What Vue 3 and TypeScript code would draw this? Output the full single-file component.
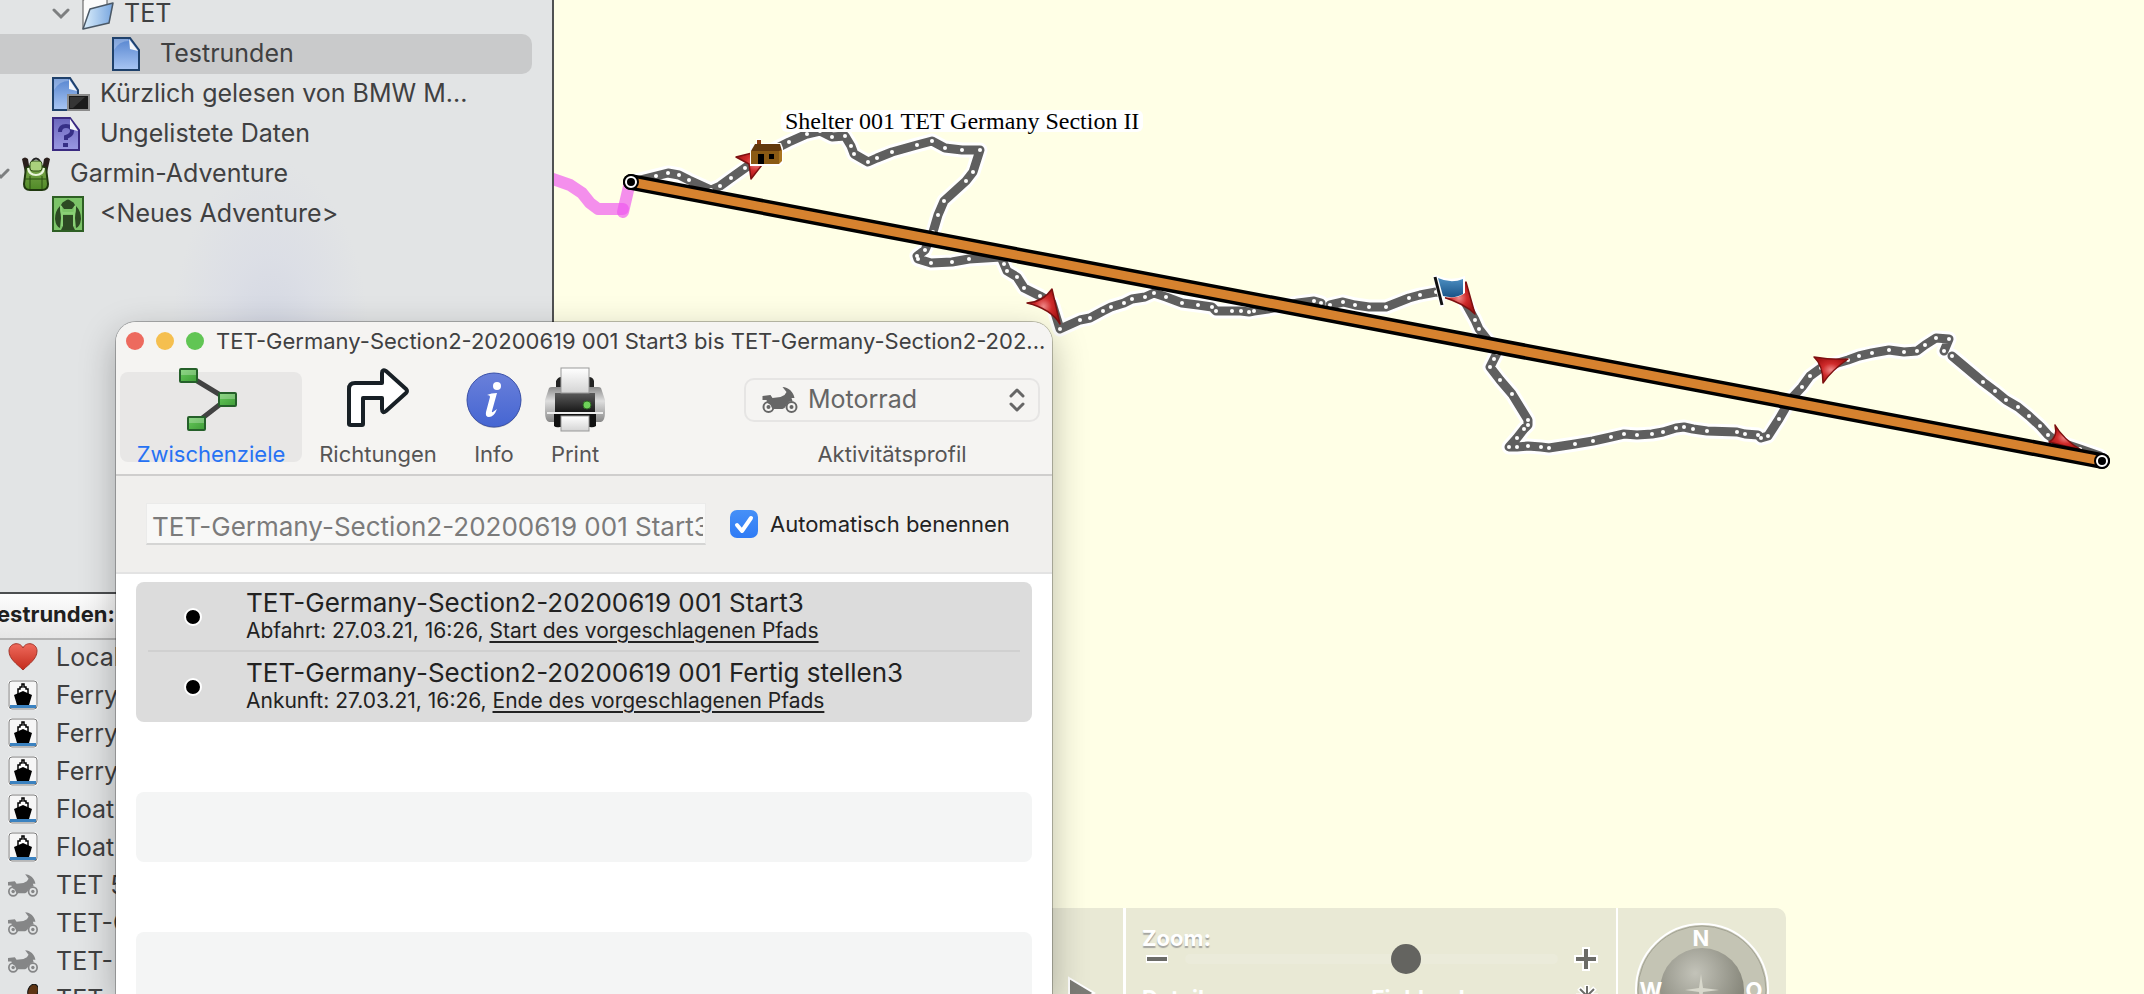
<script setup lang="ts">
import { ref } from 'vue'

interface TreeRow {
  label: string
  icon: 'folder' | 'doc' | 'device' | 'unlisted' | 'backpack' | 'adventure'
  level: string
  open?: boolean
  selected?: boolean
}
interface ListRow {
  label: string
  icon: 'heart' | 'ferry' | 'moto' | 'foot'
}
interface Stop {
  name: string
  when: string
  link: string
}
type Point = [number, number]

const tree: TreeRow[] = [
  { label: 'TET', icon: 'folder', level: 'l2', open: true },
  { label: 'Testrunden', icon: 'doc', level: 'l3', selected: true },
  { label: 'Kürzlich gelesen von BMW M...', icon: 'device', level: 'l1' },
  { label: 'Ungelistete Daten', icon: 'unlisted', level: 'l1' },
  { label: 'Garmin-Adventure', icon: 'backpack', level: 'l0', open: true },
  { label: '<Neues Adventure>', icon: 'adventure', level: 'l1' },
]

const items: ListRow[] = [
  { label: 'Local', icon: 'heart' },
  { label: 'Ferry', icon: 'ferry' },
  { label: 'Ferry', icon: 'ferry' },
  { label: 'Ferry', icon: 'ferry' },
  { label: 'Float', icon: 'ferry' },
  { label: 'Float', icon: 'ferry' },
  { label: 'TET 5', icon: 'moto' },
  { label: 'TET-G', icon: 'moto' },
  { label: 'TET-', icon: 'moto' },
  { label: 'TET', icon: 'foot' },
]

const stops: Stop[] = [
  { name: 'TET-Germany-Section2-20200619 001 Start3', when: 'Abfahrt: 27.03.21, 16:26, ', link: 'Start des vorgeschlagenen Pfads' },
  { name: 'TET-Germany-Section2-20200619 001 Fertig stellen3', when: 'Ankunft: 27.03.21, 16:26, ', link: 'Ende des vorgeschlagenen Pfads' },
]

const routeName = ref('TET-Germany-Section2-20200619 001 Start3 bis TET-Germany-Section2-20200619 001 Fertig stellen3')
const autoName = ref(true)
const profile = ref('Motorrad')
const zoom = ref(60)

const tracks: Point[][] = [
  [[632, 182], [656, 176], [668, 173], [679, 175], [689, 180], [711, 190], [720, 186], [731, 178], [745, 168], [765, 154], [789, 142], [807, 134], [820, 131], [832, 137], [845, 136], [851, 146], [854, 154], [868, 162], [877, 158], [892, 152], [917, 145], [932, 141], [945, 148], [962, 150], [980, 150], [973, 172], [966, 181], [944, 201], [938, 215], [933, 232], [925, 250], [917, 256], [918, 259], [931, 263], [952, 262], [969, 259], [1001, 257], [1004, 264], [1007, 271], [1017, 277], [1024, 288], [1040, 296], [1052, 303], [1060, 329], [1080, 320], [1090, 318], [1103, 311], [1111, 307], [1124, 303], [1132, 299], [1145, 297], [1154, 293], [1166, 297], [1182, 303], [1198, 305], [1212, 307], [1216, 311], [1232, 311], [1241, 311], [1249, 312], [1254, 311], [1268, 309], [1298, 303], [1314, 301], [1321, 303]],
  [[1330, 305], [1343, 302], [1355, 305], [1369, 307], [1386, 307], [1409, 298], [1420, 295], [1436, 292], [1460, 293], [1475, 320], [1479, 329], [1486, 338], [1497, 353], [1494, 359], [1490, 367], [1500, 380], [1512, 394], [1528, 420], [1528, 425], [1524, 429], [1517, 438], [1509, 447], [1517, 447], [1528, 446], [1541, 447], [1549, 448], [1575, 444], [1593, 441], [1611, 437], [1624, 434], [1637, 435], [1652, 434], [1663, 432], [1676, 428], [1684, 427], [1693, 429], [1707, 431], [1737, 432], [1745, 434], [1758, 435], [1761, 438], [1768, 436], [1779, 419], [1790, 400], [1802, 387], [1810, 376], [1821, 368], [1848, 360], [1859, 356], [1872, 353], [1889, 350], [1904, 352], [1917, 351], [1925, 345], [1936, 338], [1949, 339], [1944, 351]],
  [[1952, 356], [1983, 382], [1995, 391], [2006, 400], [2018, 407], [2029, 416], [2040, 426], [2048, 435], [2056, 441], [2080, 449], [2100, 456]],
]
const line = (pts: Point[]): string => pts.map((p) => p.join(',')).join(' ')
const trackPoints: Point[] = tracks.flat()
</script>

<template>
  <main class="desktop">
    <svg class="defs" aria-hidden="true">
      <defs>
        <linearGradient id="gDoc" x1="0" y1="0" x2="0" y2="1"><stop offset="0" stop-color="#5584cf" /><stop offset="1" stop-color="#a9c6f3" /></linearGradient>
        <linearGradient id="gPurple" x1="0" y1="0" x2="0" y2="1"><stop offset="0" stop-color="#6b66bd" /><stop offset="1" stop-color="#9a98e2" /></linearGradient>
        <linearGradient id="gFolder" x1="0" y1="0" x2="1" y2="0"><stop offset="0" stop-color="#dceffc" /><stop offset="1" stop-color="#78a6df" /></linearGradient>
        <linearGradient id="gPack" x1="0" y1="0" x2="0" y2="1"><stop offset="0" stop-color="#7fa850" /><stop offset="1" stop-color="#4f8a26" /></linearGradient>
        <linearGradient id="gNode" x1="0" y1="0" x2="1" y2="1"><stop offset="0" stop-color="#67cb5b" /><stop offset="1" stop-color="#3f9c38" /></linearGradient>
        <linearGradient id="gInfo" x1="0" y1="0" x2="0" y2="1"><stop offset="0" stop-color="#6a80da" /><stop offset="1" stop-color="#4565d2" /></linearGradient>
        <linearGradient id="gPaper" x1="0" y1="0" x2="0" y2="1"><stop offset="0" stop-color="#fff" /><stop offset="1" stop-color="#d4d4d4" /></linearGradient>
        <linearGradient id="gSilver" x1="0" y1="0" x2="0" y2="1"><stop offset="0" stop-color="#8a8a8a" /><stop offset=".4" stop-color="#dedede" /><stop offset="1" stop-color="#888" /></linearGradient>
        <linearGradient id="gBlack" x1="0" y1="0" x2="0" y2="1"><stop offset="0" stop-color="#5a5a5a" /><stop offset="1" stop-color="#151515" /></linearGradient>
        <linearGradient id="gHeart" x1="0" y1="0" x2="0" y2="1"><stop offset="0" stop-color="#ef6a5c" /><stop offset="1" stop-color="#c32b1c" /></linearGradient>
        <radialGradient id="gArrow"><stop offset="0" stop-color="#f08a8a" /><stop offset=".5" stop-color="#d02c2c" /><stop offset="1" stop-color="#a81414" /></radialGradient>
        <linearGradient id="gFlag" x1="0" y1="0" x2="0" y2="1"><stop offset="0" stop-color="#4d8fc2" /><stop offset="1" stop-color="#1a5488" /></linearGradient>
        <radialGradient id="gBall" cx=".42" cy=".3" r=".6"><stop offset="0" stop-color="#c3c3b9" /><stop offset="1" stop-color="#87877b" /></radialGradient>
        <symbol id="moto" viewBox="0 0 35 26">
          <g fill="none" stroke="currentColor" stroke-width="2"><circle cx="6" cy="20" r="5" /><circle cx="29" cy="20" r="5" /></g>
          <circle cx="6" cy="20" r="2" fill="currentColor" /><circle cx="29" cy="20" r="2" fill="currentColor" />
          <path fill="currentColor" d="M0 9l8-1 2 3 8-1 4-2 2-3-4-5c6 0 11 5 12 11l-3 0 1 3-4 1-4 6-2 1H10l-2-4-3-2-1-3H0z" />
        </symbol>
      </defs>
    </svg>

    <aside class="sidebar">
      <ul class="tree">
        <li v-for="row in tree" :key="row.label" class="tree-row" :class="[row.level, { selected: row.selected }]">
          <button v-if="row.open" class="chevron" type="button" aria-label="Zuklappen">
            <svg width="18" height="12" viewBox="0 0 18 12"><path d="M2 2l7 7 7-7" fill="none" stroke="#7d7f80" stroke-width="3" stroke-linecap="round" /></svg>
          </button>
          <span class="tree-icon">
            <svg v-if="row.icon === 'folder'" width="34" height="36" viewBox="0 0 34 36"><path d="M1 33V4l22-6 2 5v8z" fill="#fbfbfb" stroke="#555" /><path d="M1 33L8 13l23-6-4 20z" fill="url(#gFolder)" stroke="#4a5866" stroke-width="1.5" stroke-linejoin="round" /></svg>
            <svg v-else-if="row.icon === 'doc'" width="28" height="36" viewBox="0 0 28 36"><path d="M1 2h17l9 12v20H1z" fill="url(#gDoc)" stroke="#1f416b" stroke-width="2" /><path d="M2 14Q7 5 17 5L16 3H2z" fill="#fff" opacity=".25" /><path d="M17 3l9 12-8-2z" fill="#f4f6f8" /></svg>
            <svg v-else-if="row.icon === 'device'" width="38" height="36" viewBox="0 0 38 36"><path d="M1 2h17l8 12v20H1z" fill="url(#gDoc)" stroke="#1f416b" stroke-width="2" /><path d="M2 14Q7 5 17 5L16 3H2z" fill="#fff" opacity=".25" /><path d="M17 3l8 12-8-2z" fill="#f4f6f8" /><rect x="16" y="19" width="21" height="15" fill="#1a1a1a" stroke="#8b8b8b" stroke-width="2" /><path d="M18 21h15L21 32h-3z" fill="#fff" opacity=".12" /></svg>
            <svg v-else-if="row.icon === 'unlisted'" width="28" height="36" viewBox="0 0 28 36"><path d="M1 2h17l9 12v20H1z" fill="url(#gPurple)" stroke="#3a2a80" stroke-width="2" /><path d="M8 16q0-6 6-6t6 5q0 4-6 6v3" fill="none" stroke="#362f86" stroke-width="4" /><rect x="11" y="27" width="5" height="4" fill="#362f86" /><path d="M18 3l8 12-8-2z" fill="#f4f6f8" /></svg>
            <svg v-else-if="row.icon === 'backpack'" width="28" height="36" viewBox="0 0 28 36"><path d="M0 3q3-3 6 0l2 12-4 6zM28 3q-3-3-6 0l-2 12 4 6z" fill="#2a1f1c" /><path d="M10 5q4-5 8 0" fill="none" stroke="#222" stroke-width="2" /><path d="M4 12q10-6 20 0l2 16q0 6-6 6H8q-6 0-6-6z" fill="url(#gPack)" stroke="#20380f" stroke-width="2" /><rect x="8" y="5" width="12" height="10" rx="3" fill="#a9d07c" stroke="#33501c" /><path d="M6 12q1 7 8 7t8-7" fill="none" stroke="#e9f5dc" stroke-width="2" /><path d="M8 20v13M20 20v13M3 23h22" stroke="#2b5013" fill="none" /></svg>
            <svg v-else width="32" height="36" viewBox="0 0 32 36"><rect x="1" y="1" width="30" height="34" fill="#7cc468" stroke="#2e5f24" stroke-width="2" /><path d="M9 9q1-3 4-4 3-3 6 0 3 1 4 4l-3 4h-8z" fill="#2d4a23" /><path d="M11 19h10v11l2 4H9l2-4z" fill="#2d4a23" /><path d="M8 10q-5 5-5 13 1 8 5 9l1-10zM24 10q5 5 5 13-1 8-5 9l-1-10z" fill="#2d4a23" /><path d="M9 10q0 5 1 8v12M23 10q0 5-1 8v12M10 17h12" stroke="#8ad076" fill="none" stroke-width="2" /></svg>
          </span>
          <span class="tree-label">{{ row.label }}</span>
        </li>
      </ul>

      <section class="panel">
        <h2 class="panel-head">Testrunden:</h2>
        <ul class="items">
          <li v-for="(row, i) in items" :key="i" class="item">
            <span class="item-icon">
              <svg v-if="row.icon === 'heart'" width="30" height="30" viewBox="0 0 30 30"><path d="M15 28C9 22 1 17 1 9c0-8 11-10 14-3 3-7 14-5 14 3 0 8-8 13-14 19z" fill="url(#gHeart)" stroke="#a33428" /></svg>
              <svg v-else-if="row.icon === 'ferry'" width="30" height="30" viewBox="0 0 30 30"><rect width="30" height="30" rx="4" fill="#fff" /><rect x="1" y="1" width="28" height="28" rx="3" fill="#f6f6f6" stroke="#7b7b7b" /><path d="M2 25h26v3H2z" fill="#3b82c0" /><path d="M10 14V9h2V7h2V4h2v3h2v2h2v5" fill="#fff" stroke="#000" stroke-width="1.5" /><path d="M6 15l9-4 9 4-3 10H9z" /></svg>
              <svg v-else-if="row.icon === 'moto'" class="moto-list" width="30" height="23"><use href="#moto" /></svg>
              <svg v-else width="30" height="30" viewBox="0 0 30 30"><ellipse cx="25" cy="7" rx="5" ry="7" fill="#5e3413" stroke="#111" transform="rotate(20 25 7)" /><path d="M19 14q4 1 3 4t-5 1z" fill="#111" /></svg>
            </span>
            <span>{{ row.label }}</span>
          </li>
        </ul>
      </section>
    </aside>

    <section class="map" aria-label="Karte">
      <svg class="map-canvas">
        <g transform="translate(-554 0)">
          <g fill="none" stroke-linejoin="round">
            <g stroke="#ee55ee" stroke-opacity=".66" stroke-width="12">
              <polyline points="550,178 570,185 582,193 590,203 598,209 623,209" stroke-linecap="round" />
              <polyline points="623,212 630,182" stroke-linecap="round" />
            </g>
            <polyline v-for="(t, i) in tracks" :key="'c' + i" :points="line(t)" stroke="#fff" stroke-width="15" stroke-linecap="round" />
            <polyline v-for="(t, i) in tracks" :key="'t' + i" :points="line(t)" stroke="#5f5f5f" stroke-width="9" stroke-linecap="round" />
          </g>
          <circle v-for="(p, i) in trackPoints" :key="'p' + i" :cx="p[0]" :cy="p[1]" r="2" fill="#fff" />
          <g fill="url(#gArrow)" stroke="#7d1010" stroke-width="1.5" stroke-linejoin="round">
            <path d="M736 157l40-10-25 32-2-15z" />
            <path d="M1027 303q16-1 25-14l8 35q-9-15-33-21z" />
            <path d="M1443 297q14-2 23-15l9 32q-10-10-32-17z" />
            <path d="M1814 357q18 3 34 2-16 11-25 24 0-18-9-26z" />
            <path d="M2055 425q8 14 26 25l-32-8q9-5 6-17z" />
          </g>
          <line x1="631" y1="182" x2="2102" y2="461" stroke="#000" stroke-width="16" stroke-linecap="round" />
          <line x1="631" y1="182" x2="2102" y2="461" stroke="#d6822f" stroke-width="9" />
          <g stroke="#fff" stroke-width="2" fill="#000">
            <circle cx="631" cy="182" r="8" stroke="none" /><circle cx="631" cy="182" r="5" />
            <circle cx="2102" cy="461" r="8" stroke="none" /><circle cx="2102" cy="461" r="5" />
          </g>
          <path d="M750 144h6v-5h5v4h20l2 5v15l-3 3h-30z" fill="#fff" />
          <path d="M757 140h4v6h-4z" fill="#8a3b10" />
          <path d="M755 144h25l2 7h-31z" fill="#62380c" />
          <path d="M751 151h28v13h-28z" fill="#8a5a14" /><path d="M779 151l3-1v11l-3 3z" fill="#a9741f" />
          <path d="M758 154h6v10h-6zM769 154h5v5h-5z" />
          <path d="M1433 276l4-1q13 7 28 1v17q-8 6-20 4l-1 10h-4z" fill="#fff" />
          <path d="M1438 278q13 6 25 1v15q-8 5-20 2z" fill="url(#gFlag)" />
          <path d="M1435 277l7 28" stroke="#111" stroke-width="3" />
        </g>
      </svg>
      <p class="map-label">Shelter 001 TET Germany Section II</p>

      <div class="controls">
        <div class="pan">
          <button type="button" class="plain" aria-label="Vorwärts"><svg width="30" height="34" viewBox="0 0 30 34"><path d="M2 2l25 15L2 32z" fill="#7c7c76" stroke="#fff" stroke-width="2" /></svg></button>
        </div>
        <div class="sliders">
          <label class="ctl-label" for="zoom">Zoom:</label>
          <div class="slider-row">
            <button type="button" class="plain" aria-label="Verkleinern"><svg width="24" height="24" viewBox="0 0 24 24"><path d="M1 8h22v8H1z" fill="#fff" /><path d="M2 10h20v4H2z" fill="#6c6c68" /></svg></button>
            <input id="zoom" v-model="zoom" class="range" type="range" min="0" max="100" />
            <button type="button" class="plain" aria-label="Vergrößern"><svg width="24" height="24" viewBox="0 0 24 24"><path d="M8 0h8v8h8v8h-8v8H8v-8H0V8h8z" fill="#fff" /><path d="M10 2h4v8h8v4h-8v8h-4v-8H2v-4h8z" fill="#6c6c68" /></svg></button>
          </div>
          <div class="detail-row">
            <span>Detail:</span><span class="detail-mid">Einblenden</span>
            <svg width="22" height="22" viewBox="0 0 22 22"><path d="M11 0v22M0 11h22M3 3l16 16M19 3L3 19" stroke="#fff" stroke-width="5" /><path d="M11 1v20M1 11h20M4 4l14 14M18 4L4 18" stroke="#6c6c68" stroke-width="2" /></svg>
          </div>
        </div>
        <div class="compass">
          <svg width="136" height="136" viewBox="0 0 136 136">
            <circle cx="68" cy="68" r="66" fill="#c4c4b4" stroke="#fff" stroke-width="2" />
            <circle cx="68" cy="68" r="64" fill="none" stroke="#a3a393" />
            <circle cx="68" cy="68" r="42" fill="url(#gBall)" />
            <path d="M67 52l2 14 16 2-16 2-2 14-2-14-14-2 14-2z" fill="#d8d8cc" />
            <g class="compass-text"><text x="67" y="24">N</text><text x="17" y="76">W</text><text x="120" y="76">O</text></g>
          </svg>
        </div>
      </div>
    </section>

    <section class="window" aria-label="Route">
      <header class="window-head">
        <div class="titlebar">
          <button type="button" class="light red" aria-label="Schließen"></button>
          <button type="button" class="light yellow" aria-label="Minimieren"></button>
          <button type="button" class="light green" aria-label="Vergrößern"></button>
          <h1 class="title">TET-Germany-Section2-20200619 001 Start3 bis TET-Germany-Section2-202...</h1>
        </div>
        <nav class="toolbar">
          <button type="button" class="tool via active">
            <svg width="66" height="66" viewBox="0 0 66 66"><path d="M11 9L49 32 18 56" fill="none" stroke="#424242" stroke-width="5" /><g fill="url(#gNode)" stroke="#25602a" stroke-width="2"><rect x="2" y="2" width="17" height="13" rx="1" /><rect x="41" y="26" width="17" height="13" rx="1" /><rect x="10" y="50" width="17" height="13" rx="1" /></g><path d="M3 3h15v5H3zM42 27h15v5H42zM11 51h15v5H11z" fill="#fff" opacity=".25" /></svg>
            <span>Zwischenziele</span>
          </button>
          <button type="button" class="tool dir">
            <svg width="62" height="66" viewBox="0 0 62 66"><path d="M2 57V22q0-6 6-6h27V6q0-4 4-2l20 18q2 2 0 4L39 44q-4 3-4-2V31H16v26q0 1-1 1H4q-2 0-2-1z" fill="#fff" stroke="#182026" stroke-width="4" stroke-linejoin="round" /></svg>
            <span>Richtungen</span>
          </button>
          <button type="button" class="tool info">
            <svg width="56" height="66" viewBox="0 0 56 66"><circle cx="28" cy="34" r="27" fill="#000" opacity=".2" /><circle cx="28" cy="33" r="27" fill="url(#gInfo)" stroke="#3a50a8" /><circle cx="31" cy="19" r="4" fill="#fff" /><path d="M21 28q4-2 10-2l-5 18q-1 3 5-2-3 8-8 8-4 0-3-5l4-15q0-2-3-2z" fill="#fff" /></svg>
            <span>Info</span>
          </button>
          <button type="button" class="tool print">
            <svg width="60" height="66" viewBox="0 0 60 66"><path d="M11 26V14q2-4 5-4h28q4 0 5 4v12z" fill="#222" /><path d="M4 21q1-1 3-1h46q2 0 3 1l4 12v12q0 9-4 10H4Q0 54 0 45V33z" fill="url(#gSilver)" /><path d="M9 47h42v12q-3 2-6 1H15q-4 1-6-1z" fill="#111" /><rect x="10" y="26" width="40" height="20" fill="url(#gBlack)" /><path d="M2 45h56v2H2z" fill="#eee" /><rect x="16" y="1" width="28" height="25" fill="url(#gPaper)" stroke="#999" /><rect x="16" y="49" width="28" height="15" fill="url(#gPaper)" stroke="#999" /><circle cx="42" cy="38" r="4" fill="#6fd15a" stroke="#2c6a22" /></svg>
            <span>Print</span>
          </button>
          <div class="profile">
            <div class="select-box">
              <svg class="select-moto" width="36" height="26"><use href="#moto" /></svg>
              <select id="profile" v-model="profile" class="select"><option>Motorrad</option></select>
              <svg class="select-arrows" width="16" height="24" viewBox="0 0 16 24"><path d="M2 8l6-6 6 6M2 16l6 6 6-6" fill="none" stroke="#666" stroke-width="3" stroke-linecap="round" stroke-linejoin="round" /></svg>
            </div>
            <label for="profile">Aktivitätsprofil</label>
          </div>
        </nav>
      </header>
      <form class="name-row" @submit.prevent>
        <input v-model="routeName" class="name-input" type="text" aria-label="Name der Route" />
        <label class="auto">
          <input v-model="autoName" class="check" type="checkbox" />
          <svg class="tick" width="28" height="28" viewBox="0 0 28 28"><path d="M7 15l5 6 9-13" fill="none" stroke="#fff" stroke-width="4" stroke-linecap="round" stroke-linejoin="round" /></svg>
          <span>Automatisch benennen</span>
        </label>
      </form>
      <ol class="stops">
        <li v-for="s in stops" :key="s.name" class="stop">
          <span class="bullet"></span>
          <div class="stop-text">
            <strong>{{ s.name }}</strong>
            <p>{{ s.when }}<a href="#">{{ s.link }}</a></p>
          </div>
        </li>
        <li class="blank"></li>
        <li class="blank shaded"></li>
        <li class="blank"></li>
        <li class="blank shaded"></li>
      </ol>
    </section>
  </main>
</template>

<style>
body {
  margin: 0;
}
</style>

<style scoped>
.desktop {
  position: relative;
  display: grid;
  grid-template-columns: 552px 1fr;
  height: 100vh;
  overflow: hidden;
  font-family: Inter, "Liberation Sans", sans-serif;
  color: #3f4041;
}
.defs {
  position: absolute;
  width: 0;
  height: 0;
}
ul,
ol,
p,
h1,
h2 {
  margin: 0;
  padding: 0;
  list-style: none;
}
button {
  font: inherit;
  color: inherit;
  border: 0;
  padding: 0;
  background: none;
}
svg {
  display: block;
  flex: none;
}
.sidebar {
  display: flex;
  flex-direction: column;
  min-height: 0;
  overflow: hidden;
  background:
    radial-gradient(ellipse 100px 190px at 270px 350px, #d2d6e2 0, rgba(216, 219, 230, 0.6) 50%, transparent 100%),
    #e2e4e5;
}
.tree {
  flex: none;
  height: 598px;
  margin-top: -6px;
  font-size: 25px;
}
.tree-row {
  display: flex;
  align-items: center;
  height: 40px;
  margin-right: 20px;
  white-space: nowrap;
}
.tree-row.selected {
  background: #c9cacb;
  border-radius: 0 10px 10px 0;
}
.l0 { padding-left: 22px; }
.l1 { padding-left: 52px; }
.l2 { padding-left: 82px; }
.l3 { padding-left: 112px; }
.chevron {
  width: 18px;
  margin-left: -30px;
  margin-right: 12px;
}
.tree-icon {
  width: 48px;
}
.l2 .tree-icon {
  width: 42px;
}
.tree-label {
  padding-bottom: 2px;
}
.panel {
  flex: 1;
  border-top: 2px solid #4c4e50;
  font-size: 25px;
}
.panel-head {
  height: 44px;
  line-height: 40px;
  text-indent: -16px;
  font-size: 22px;
  font-weight: 700;
  color: #1f1f1f;
  background: linear-gradient(#fdfdfd, #e6e6e6);
  border-bottom: 2px solid #b4b4b4;
}
.items {
  margin-top: -2px;
}
.item {
  display: flex;
  align-items: center;
  height: 38px;
  white-space: nowrap;
}
.item-icon {
  width: 48px;
  padding-left: 8px;
}
.moto-list {
  color: #858687;
}
.map {
  position: relative;
  overflow: hidden;
  border-left: 2px solid #505152;
  background: #ffffe6;
}
.map-canvas {
  width: 100%;
  height: 100%;
}
.map-label {
  position: absolute;
  left: 227px;
  top: 110px;
  padding: 0 4px;
  line-height: 22px;
  font-family: "Liberation Serif", serif;
  font-size: 24px;
  color: #000;
  background: #fff;
  border-radius: 6px;
  white-space: nowrap;
}
.controls {
  position: absolute;
  left: 398px;
  bottom: -64px;
  display: flex;
  width: 834px;
  height: 150px;
  border-radius: 10px;
  background: #e9e9d5;
  color: #fff;
  font-size: 22px;
  font-weight: 700;
}
.plain {
  display: block;
}
.pan {
  width: 56px;
  padding: 68px 0 0 115px;
}
.sliders {
  flex: 1;
  padding: 21px 18px 0 16px;
  border-left: 3px solid #fff;
  border-right: 2px solid #fff;
}
.ctl-label {
  display: block;
  line-height: 18px;
  text-shadow: 0 2px 1px #a5a5a0;
}
.slider-row {
  display: flex;
  align-items: center;
  gap: 16px;
  height: 24px;
  padding-left: 3px;
}
.range {
  appearance: none;
  flex: 1;
  height: 10px;
  margin: 0;
  border-radius: 5px;
  background: #ebebda;
}
.range::-webkit-slider-thumb {
  appearance: none;
  width: 30px;
  height: 30px;
  border-radius: 50%;
  background: #646460;
}
.detail-row {
  display: flex;
  margin-top: 14px;
  line-height: 26px;
}
.detail-mid {
  margin: 0 auto 0 160px;
}
.compass {
  width: 168px;
  padding: 14px 0 0 16px;
  box-sizing: border-box;
}
.compass-text {
  fill: #fff;
  font-size: 22px;
  font-weight: 700;
  text-anchor: middle;
}
.window {
  position: absolute;
  z-index: 2;
  left: 116px;
  top: 322px;
  bottom: 0;
  width: 936px;
  overflow: hidden;
  border-radius: 20px 20px 0 0;
  background: #fff;
  box-shadow: 0 0 0 1px rgba(0, 0, 0, 0.25), 0 12px 36px rgba(0, 0, 0, 0.28);
}
.window-head {
  background: #f5f4f2;
  border-bottom: 2px solid #cfcecd;
}
.titlebar {
  display: flex;
  align-items: center;
  gap: 12px;
  height: 38px;
  padding: 0 10px;
}
.light {
  flex: none;
  width: 18px;
  height: 18px;
  border-radius: 50%;
}
.red { background: #ed6a5e; }
.yellow { background: #f5bf4f; }
.green { background: #61c554; }
.title {
  font-size: 22px;
  font-weight: 400;
  white-space: nowrap;
}
.toolbar {
  display: flex;
  align-items: flex-start;
  height: 114px;
  padding: 0 12px 0 4px;
  font-size: 22px;
  color: #555;
}
.tool {
  display: flex;
  flex-direction: column;
  align-items: center;
  height: 102px;
  padding-top: 7px;
  box-sizing: border-box;
  line-height: 26px;
}
.tool span {
  margin-top: 8px;
}
.via { width: 182px; }
.dir { width: 152px; }
.info { width: 80px; }
.print { width: 82px; }
.active {
  position: relative;
  isolation: isolate;
  color: #2672f4;
}
.active::before {
  content: "";
  position: absolute;
  z-index: -1;
  inset: 12px 0 0;
  border-radius: 8px;
  background: #e8e7e6;
}
.profile {
  display: flex;
  flex-direction: column;
  align-items: center;
  width: 296px;
  margin: 18px 0 0 auto;
}
.profile label {
  margin-top: 19px;
  line-height: 26px;
}
.select-box {
  position: relative;
  width: 100%;
  height: 44px;
  color: #666;
}
.select {
  appearance: none;
  width: 100%;
  height: 44px;
  padding: 0 40px 2px 62px;
  border: 2px solid #e6e5e4;
  border-radius: 10px;
  background: transparent;
  font: inherit;
  font-size: 25px;
  color: #666;
}
.select-moto {
  position: absolute;
  left: 18px;
  top: 9px;
}
.select-arrows {
  position: absolute;
  right: 15px;
  top: 10px;
}
.name-row {
  display: flex;
  align-items: center;
  gap: 24px;
  height: 96px;
  padding: 0 30px;
  background: #f0efed;
  border-bottom: 2px solid #e3e3e3;
}
.name-input {
  width: 560px;
  height: 42px;
  box-sizing: border-box;
  padding: 5px 2px 0 5px;
  border: 1px solid #ebebea;
  border-bottom: 2px solid #d5d5d4;
  background: #f8f8f7;
  font: inherit;
  font-size: 26px;
  color: #7b7b7b;
}
.auto {
  display: flex;
  align-items: center;
  position: relative;
  gap: 12px;
  font-size: 22px;
  color: #222;
  white-space: nowrap;
}
.check {
  appearance: none;
  width: 28px;
  height: 28px;
  margin: 0;
  border-radius: 7px;
  background: linear-gradient(#4690f7, #2f7bf5);
}
.tick {
  position: absolute;
  left: 0;
  top: 0;
}
.stops {
  padding: 8px 20px 0;
  color: #222;
}
.stop {
  position: relative;
  display: flex;
  align-items: center;
  height: 70px;
  background: #dcdcdc;
}
.stop:first-child {
  border-radius: 8px 8px 0 0;
}
.stop:nth-child(2) {
  border-radius: 0 0 8px 8px;
}
.stop:first-child::after {
  content: "";
  position: absolute;
  left: 12px;
  right: 12px;
  bottom: 0;
  height: 2px;
  background: #d0d0d0;
}
.bullet {
  width: 14px;
  height: 14px;
  margin: 0 44px 0 48px;
  border: 2px solid #fff;
  border-radius: 50%;
  background: #000;
}
.stop-text {
  padding-bottom: 2px;
}
.stop-text strong {
  display: block;
  line-height: 30px;
  font-size: 26px;
  font-weight: 400;
}
.stop-text p {
  line-height: 26px;
  font-size: 21px;
  color: #222;
}
.stop-text a {
  color: inherit;
  text-underline-offset: 3px;
}
.blank {
  height: 70px;
  border-radius: 8px;
}
.shaded {
  background: #f4f5f5;
}
</style>
